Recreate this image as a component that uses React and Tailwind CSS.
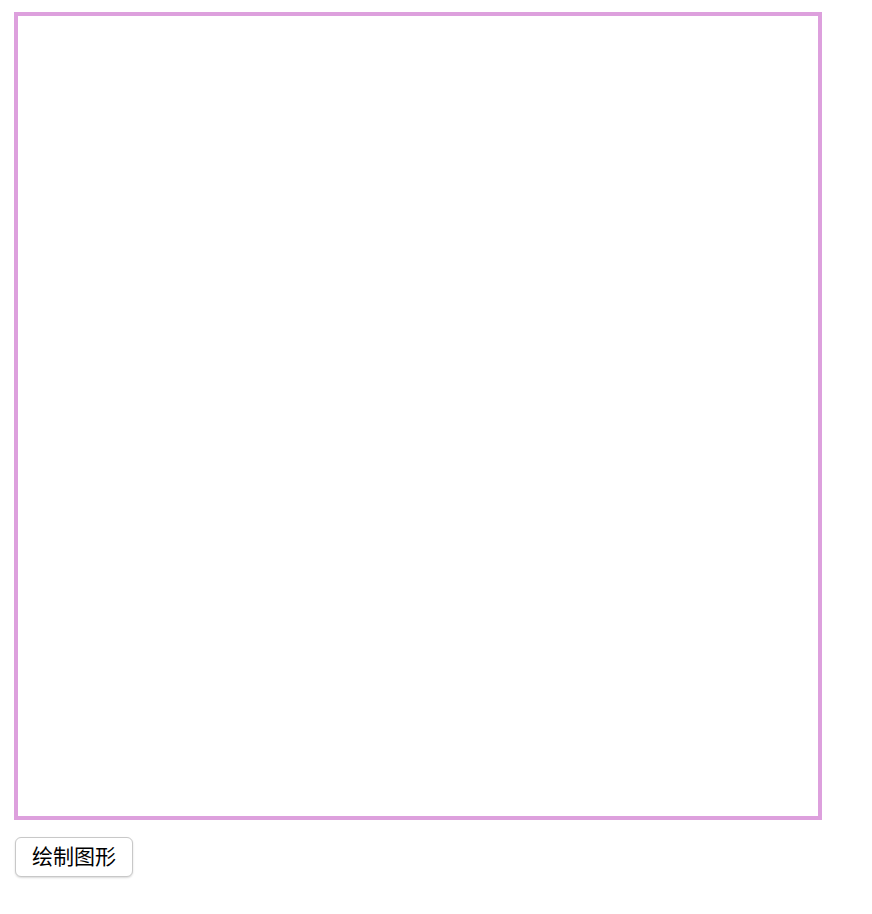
export default function App() {
  return (
    <div className="min-h-screen bg-white pl-[14px] pt-[12px] font-['Liberation_Sans','Noto_Sans_CJK_SC',sans-serif]">
      <div className="w-[808px] h-[808px] border-4 border-[#dda0dd] bg-white" />
      <button
        type="button"
        className="mt-[17px] ml-[1px] w-[118px] h-[40px] pb-[3px] rounded-[6px] border border-[#c8c8c8] bg-white text-[21px] text-black leading-none shadow-[0_1px_2px_rgba(0,0,0,0.15)] font-['Noto_Sans_CJK_SC',sans-serif]"
      >
        绘制图形
      </button>
    </div>
  );
}
